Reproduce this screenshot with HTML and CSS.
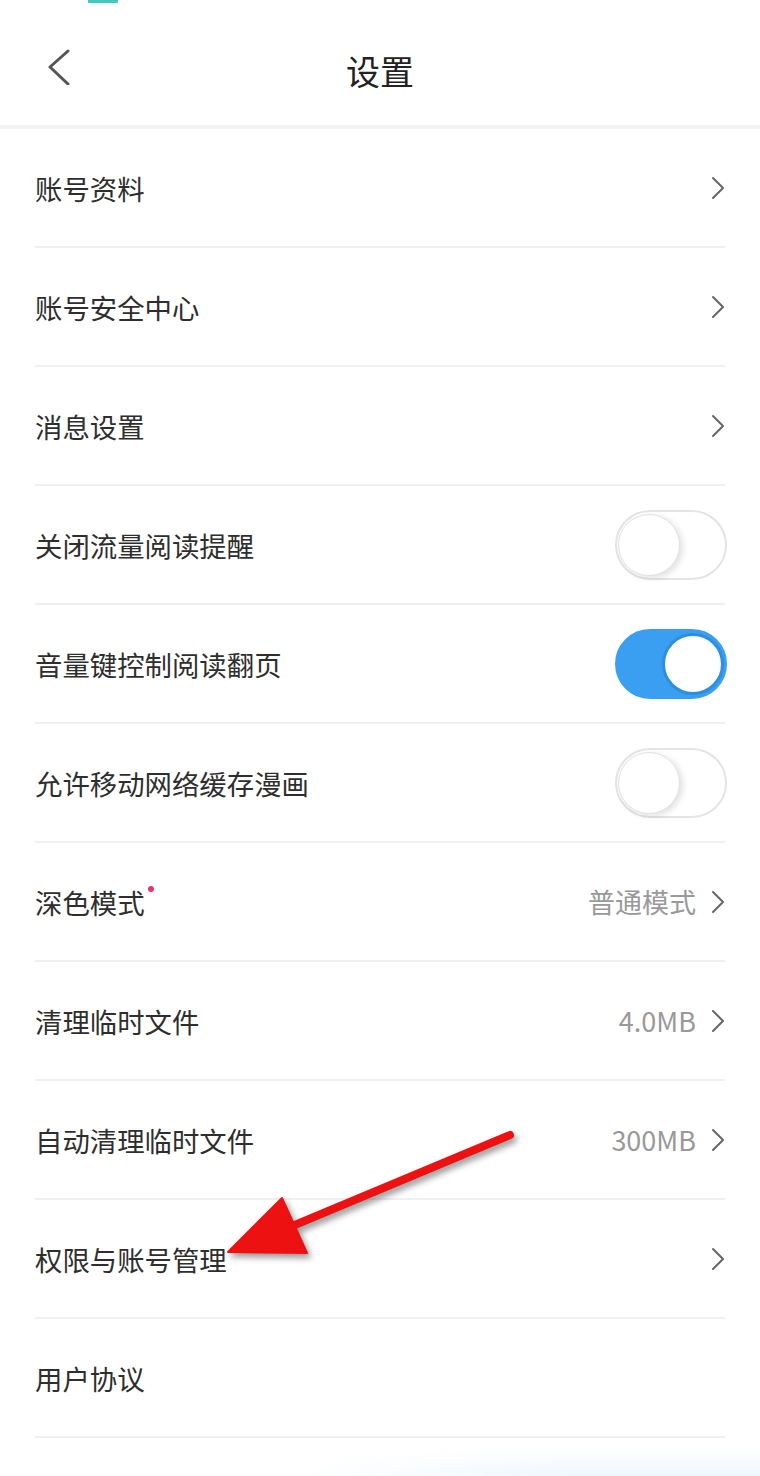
FILE: index.html
```html
<!DOCTYPE html>
<html lang="zh-CN">
<head>
    <meta charset="UTF-8">
    <meta name="viewport" content="width=device-width, initial-scale=1.0">
    <title>设置</title>
    <link rel="stylesheet" href="styles.css">
</head>
<body>
    <div class="status"><span class="status-mark"></span></div>

    <div class="nav">
        <span class="back">
            <svg width="24" height="36" viewBox="0 0 24 36"><polyline points="21,2 3,18 21,35" fill="none" stroke="#555" stroke-width="3" stroke-linecap="round" stroke-linejoin="round"/></svg>
        </span>
        <h1 class="title">设置</h1>
    </div>
    <div class="nav-line"></div>

    <ul class="list">
        <li class="row">
            <span class="label">账号资料</span>
            <span class="extra"><svg class="chev" width="14" height="24" viewBox="0 0 14 24"><polyline points="2,2 12,12 2,22"/></svg></span>
        </li>
        <li class="row">
            <span class="label">账号安全中心</span>
            <span class="extra"><svg class="chev" width="14" height="24" viewBox="0 0 14 24"><polyline points="2,2 12,12 2,22"/></svg></span>
        </li>
        <li class="row">
            <span class="label">消息设置</span>
            <span class="extra"><svg class="chev" width="14" height="24" viewBox="0 0 14 24"><polyline points="2,2 12,12 2,22"/></svg></span>
        </li>
        <li class="row">
            <span class="label">关闭流量阅读提醒</span>
            <span class="switch"><span class="knob"></span></span>
        </li>
        <li class="row">
            <span class="label">音量键控制阅读翻页</span>
            <span class="switch on"><span class="knob"></span></span>
        </li>
        <li class="row">
            <span class="label">允许移动网络缓存漫画</span>
            <span class="switch"><span class="knob"></span></span>
        </li>
        <li class="row">
            <span class="label">深色模式<span class="dot"></span></span>
            <span class="extra"><span class="value">普通模式</span><svg class="chev" width="14" height="24" viewBox="0 0 14 24"><polyline points="2,2 12,12 2,22"/></svg></span>
        </li>
        <li class="row">
            <span class="label">清理临时文件</span>
            <span class="extra"><span class="value">4.0MB</span><svg class="chev" width="14" height="24" viewBox="0 0 14 24"><polyline points="2,2 12,12 2,22"/></svg></span>
        </li>
        <li class="row">
            <span class="label">自动清理临时文件</span>
            <span class="extra"><span class="value">300MB</span><svg class="chev" width="14" height="24" viewBox="0 0 14 24"><polyline points="2,2 12,12 2,22"/></svg></span>
        </li>
        <li class="row">
            <span class="label">权限与账号管理</span>
            <span class="extra"><svg class="chev" width="14" height="24" viewBox="0 0 14 24"><polyline points="2,2 12,12 2,22"/></svg></span>
        </li>
        <li class="row">
            <span class="label">用户协议</span>
        </li>
    </ul>
    <div class="bottom-glow"></div>

    <!-- annotation arrow drawn over the list -->
    <svg class="arrow" width="310" height="150" viewBox="0 0 310 150">
        <g fill="#ee1111" stroke="#ee1111">
            <line x1="290" y1="10" x2="70" y2="102" stroke-width="8" stroke-linecap="round"/>
            <polygon points="8,127 62,73 87,128" stroke-width="2" stroke-linejoin="round"/>
        </g>
    </svg>
</body>
</html>
```

FILE: styles.css
```css
body {
    margin: 0;
    width: 760px;
    min-height: 1476px;
    position: relative;
    background: #fff;
    font-family: "Noto Sans CJK SC", "Noto Sans", sans-serif;
    color: #333;
}
.status {
    height: 3px;
}
.status-mark {
    display: block;
    margin-left: 88px;
    width: 30px;
    height: 3px;
    background: #45c8c0;
}
.nav {
    height: 122px;
    box-sizing: border-box;
    padding-top: 12px;
    display: flex;
    align-items: center;
    justify-content: center;
    position: relative;
}
.back {
    position: absolute;
    left: 47px;
    top: 46px;
    display: flex;
}
.title {
    margin: 0;
    font-size: 34px;
    font-weight: 400;
    color: #222;
}
.nav-line {
    height: 4px;
    background: #f3f3f3;
}
.list {
    list-style: none;
    margin: 0;
    padding: 0;
}
.row {
    margin: 0 35px;
    height: 119px;
    box-sizing: border-box;
    border-bottom: 2px solid #f0f0f0;
    display: flex;
    align-items: center;
    justify-content: space-between;
    font-size: 27.4px;
}
.label {
    position: relative;
    color: #2e2e2e;
}
.dot {
    position: absolute;
    right: -9px;
    top: 4px;
    width: 6px;
    height: 6px;
    border-radius: 50%;
    background: #f2306b;
}
.extra {
    display: flex;
    align-items: center;
    gap: 15px;
}
.value {
    color: #999;
    font-size: 27px;
}
.chev {
    display: block;
}
.chev polyline {
    fill: none;
    stroke: #666;
    stroke-width: 2;
    stroke-linecap: round;
    stroke-linejoin: round;
}
.switch {
    width: 112px;
    height: 70px;
    box-sizing: border-box;
    border-radius: 35px;
    border: 2px solid #e4e4e4;
    background: #fff;
    display: flex;
    align-items: center;
    padding: 1px;
    margin-right: -2px;
}
.knob {
    width: 62px;
    height: 62px;
    box-sizing: border-box;
    border-radius: 50%;
    background: #fff;
    border: 1px solid #e2e2e2;
    box-shadow: 3px 2px 6px rgba(0, 0, 0, 0.12);
}
.switch.on {
    justify-content: flex-end;
    background: #3a9ff0;
    border-color: #3a9ff0;
}
.switch.on .knob {
    border: 3px solid #2c8fe0;
    box-shadow: none;
}
.bottom-glow {
    height: 38px;
    background: linear-gradient(to bottom, rgba(255,255,255,0) 30%, #eef6fd 100%);
    -webkit-mask-image: linear-gradient(to right, transparent 40%, #000 75%);
}
.arrow {
    position: absolute;
    left: 220px;
    top: 1125px;
    filter: drop-shadow(3px 4px 3px rgba(0, 0, 0, 0.4));
}
```
